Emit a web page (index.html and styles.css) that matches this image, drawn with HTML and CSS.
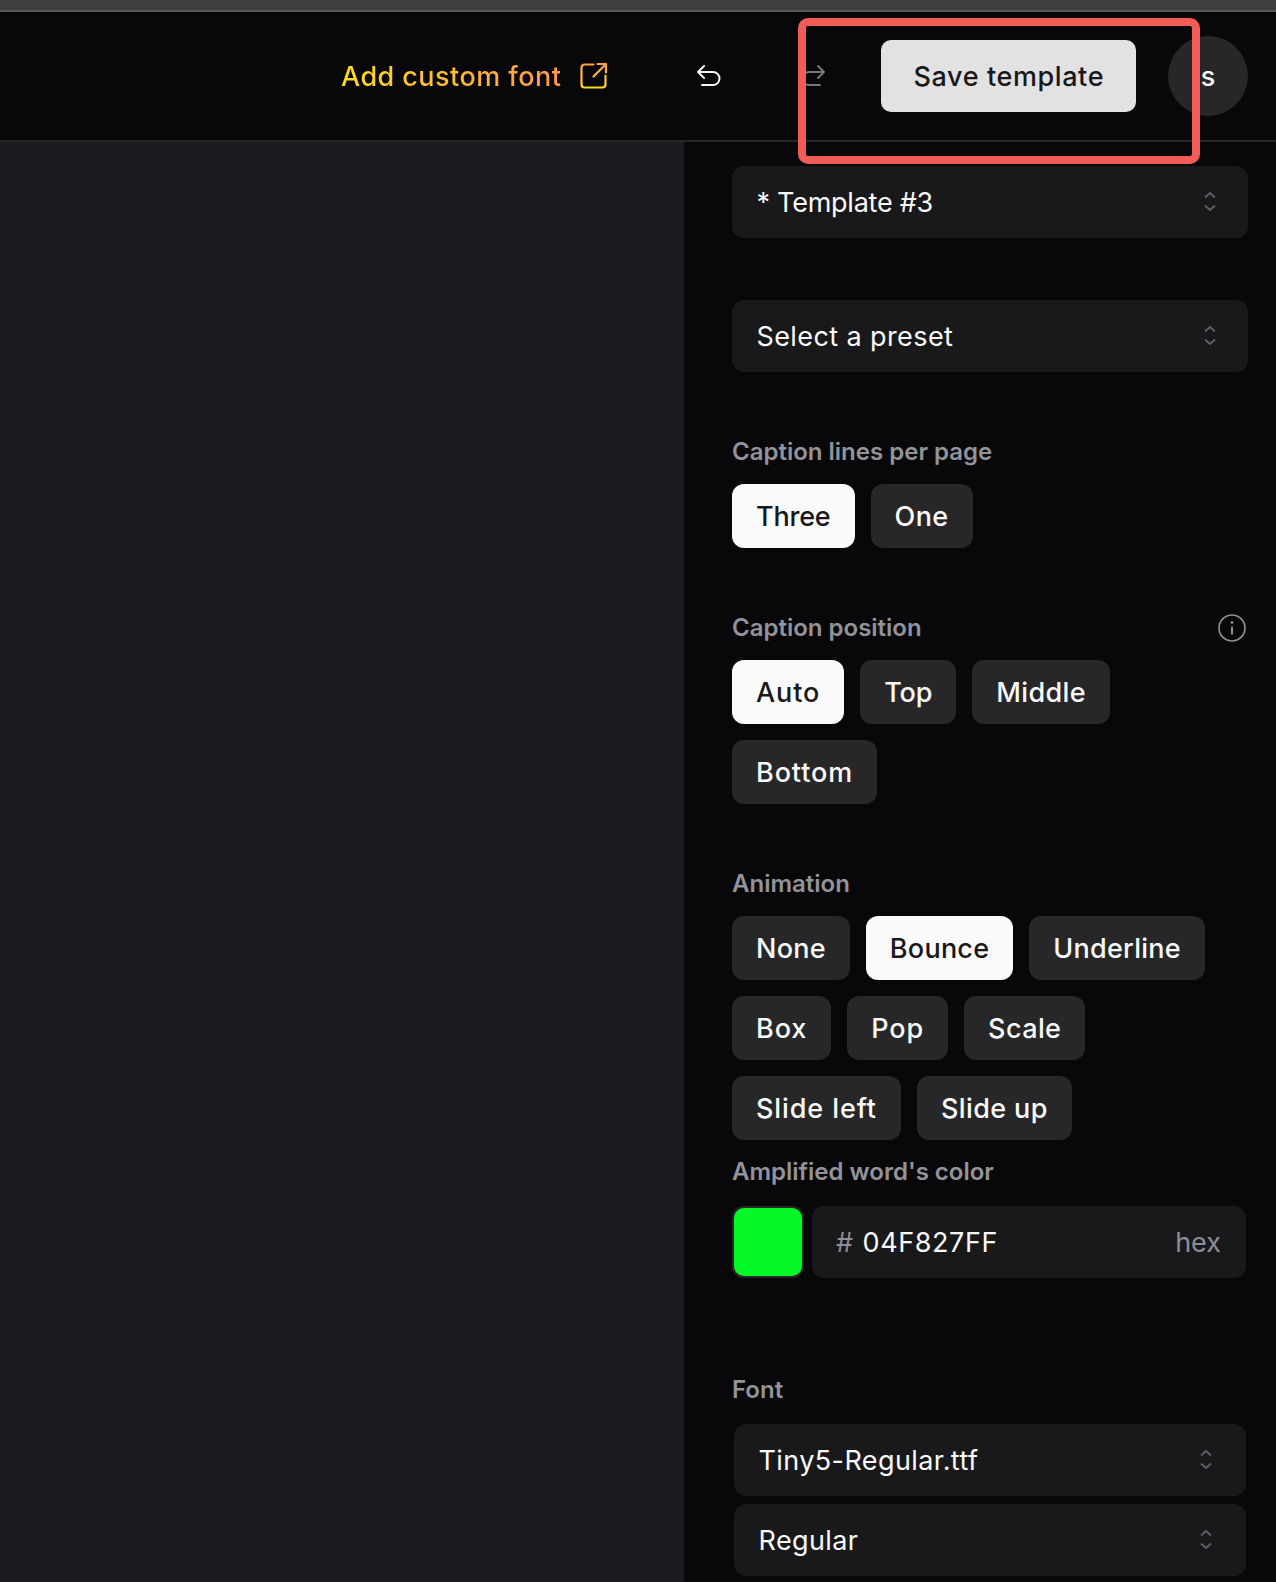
FILE: index.html
```html
<!DOCTYPE html>
<html lang="en">
<head>
<meta charset="utf-8">
<title>Template editor</title>
<link rel="stylesheet" href="styles.css">
</head>
<body>
<div class="app">
  <div class="strip"></div>
  <header class="topbar">
    <a class="custom-font"><span class="gradient-text">Add custom font</span>
      <svg class="ext-icon" width="28" height="28" viewBox="0 0 28 28" fill="none">
        <defs><linearGradient id="g" gradientUnits="userSpaceOnUse" x1="14" y1="1" x2="14" y2="27"><stop offset="0" stop-color="#ff9c4c"/><stop offset="1" stop-color="#ffdc1e"/></linearGradient></defs>
        <path d="M13.500 2.500H4.500a3 3 0 0 0-3 3v17a3 3 0 0 0 3 3h18a3 3 0 0 0 3-3v-9M17.500 2h8.500v8.500M25.500 2.500 13.500 14.500" stroke="url(#g)" stroke-width="2.200" stroke-linecap="round" stroke-linejoin="round"/>
      </svg>
    </a>
    <svg class="undo" width="26" height="22" viewBox="0 0 26 22" fill="none"><path d="M8 1 2 7l6 6M2 7h15a6.500 6.500 0 0 1 0 13H6" stroke="#f5f5f5" stroke-width="2" stroke-linecap="round" stroke-linejoin="round"/></svg>
    <svg class="redo" width="26" height="22" viewBox="0 0 26 22" fill="none"><path d="m18 1 6 6-6 6M24 7H9a6.500 6.500 0 0 0 0 13h11" stroke="#77777b" stroke-width="2" stroke-linecap="round" stroke-linejoin="round"/></svg>
    <button class="save">Save template</button>
    <div class="avatar">s</div>
  </header>
  <main class="main">
    <div class="canvas"></div>
    <aside class="panel">
      <div class="select"><span class="narrow">* Template #3</span>
        <svg class="chev" width="14" height="22" viewBox="0 0 14 22" fill="none"><path d="m2.500 6 4.500-4 4.500 4M2.500 15 7 19l4.500-4" stroke="#5f5f66" stroke-width="1.800" stroke-linecap="round" stroke-linejoin="round"/></svg></div>
      <div class="select preset"><span>Select a preset</span>
        <svg class="chev" width="14" height="22" viewBox="0 0 14 22" fill="none"><path d="m2.500 6 4.500-4 4.500 4M2.500 15 7 19l4.500-4" stroke="#5f5f66" stroke-width="1.800" stroke-linecap="round" stroke-linejoin="round"/></svg></div>

      <div class="label first">Caption lines per page</div>
      <div class="chips">
        <button class="chip on narrow">Three</button><button class="chip">One</button>
      </div>

      <div class="label with-info">Caption position
        <svg width="28" height="28" viewBox="0 0 28 28" fill="none"><circle cx="14" cy="14" r="13" stroke="#8e8e93" stroke-width="1.700"/><path d="M14 12.500v8" stroke="#a5a5aa" stroke-width="1.700"/><circle cx="14" cy="8.500" r="1.200" fill="#a5a5aa"/></svg>
      </div>
      <div class="chips">
        <button class="chip on wide">Auto</button><button class="chip narrow">Top</button><button class="chip">Middle</button><button class="chip wide">Bottom</button>
      </div>

      <div class="label">Animation</div>
      <div class="chips">
        <button class="chip snug">None</button><button class="chip on snug">Bounce</button><button class="chip snug">Underline</button><button class="chip wide">Box</button><button class="chip wide">Pop</button><button class="chip">Scale</button><button class="chip wide">Slide left</button><button class="chip">Slide up</button>
      </div>

      <div class="label tight">Amplified word's color</div>
      <div class="color-row">
        <div class="swatch"></div>
        <div class="hex-field"><span class="hash">#</span><span class="hex-value">04F827FF</span><span class="hex-unit">hex</span></div>
      </div>

      <div class="label font-label">Font</div>
      <div class="select inset"><span>Tiny5-Regular.ttf</span>
        <svg class="chev" width="14" height="22" viewBox="0 0 14 22" fill="none"><path d="m2.500 6 4.500-4 4.500 4M2.500 15 7 19l4.500-4" stroke="#5f5f66" stroke-width="1.800" stroke-linecap="round" stroke-linejoin="round"/></svg></div>
      <div class="select inset second"><span>Regular</span>
        <svg class="chev" width="14" height="22" viewBox="0 0 14 22" fill="none"><path d="m2.500 6 4.500-4 4.500 4M2.500 15 7 19l4.500-4" stroke="#5f5f66" stroke-width="1.800" stroke-linecap="round" stroke-linejoin="round"/></svg></div>
    </aside>
  </main>
  <div class="highlight"></div>
</div>
</body>
</html>
```
FILE: styles.css
```css
* { box-sizing: border-box; }
html, body { margin: 0; height: 100%; background: #08080a; overflow: hidden; }
body { font-family: Inter, "Liberation Sans", sans-serif; color: #fafafa; font-size: 27px; font-weight: 450; letter-spacing: 0.4px; }
button { font: inherit; letter-spacing: inherit; border: 0; }

.app { position: relative; height: 1582px; display: flex; flex-direction: column; overflow: hidden; }
.strip { height: 12px; flex: none; background: #3e3e3e; border-bottom: 2px solid #55555a; }

.topbar { flex: none; height: 130px; display: flex; align-items: center; background: #08080a; border-bottom: 2px solid #27272a; padding: 0 0 0 341px; }
.topbar > * { flex: none; }
.custom-font { display: flex; align-items: center; gap: 19px; font-weight: 500; letter-spacing: 0.45px; white-space: nowrap; }
.gradient-text { background: linear-gradient(90deg, #ffdc1e, #ff9a4d); -webkit-background-clip: text; background-clip: text; color: transparent; }
.ext-icon { display: block; flex: none; }
.undo { margin-left: 88px; }
.redo { margin-left: 78px; }
.save { margin-left: 55px; width: 255px; height: 72px; background: #e2e2e2; color: #18181b; border-radius: 10px; padding: 0; letter-spacing: 0.6px; }
.avatar { margin-left: 32px; width: 80px; height: 80px; border-radius: 50%; background: #27272a; display: flex; align-items: center; justify-content: center; font-weight: 500; }

.main { flex: 1; min-height: 0; display: flex; }
.canvas { flex: 1; background: #1b1c20; }
.panel { flex: none; width: 592px; padding: 24px 28px 0 48px; background: #08080a; }

.select { height: 72px; display: flex; align-items: center; justify-content: space-between; background: #19191c; border-radius: 12px; padding: 0 31.5px 0 24.5px; font-weight: 400; }
.select span { letter-spacing: 0.4px; }
.select .narrow { letter-spacing: -0.25px; }
.preset { margin-top: 62px; }
.inset { margin: 0 2px 0 2px; padding-right: 33px; }
.second { margin-top: 8px; }
.chev { display: block; }

.label { height: 32px; line-height: 32px; margin-top: 64px; margin-bottom: 16px; color: #93939a; font-size: 24px; font-weight: 600; letter-spacing: 0; display: flex; align-items: center; justify-content: space-between; }
.label.tight { margin-top: 16px; margin-bottom: 18px; }
.label.font-label { margin-top: 96px; margin-bottom: 18px; }
.with-info svg { margin-right: 2px; }

.chips { display: flex; flex-wrap: wrap; gap: 16px; }
.chip { height: 64px; padding: 0 24px; border-radius: 12px; background: #27272a; color: #fafafa; }
.chip.on { background: #fafafa; color: #18181b; }
.chip.narrow { letter-spacing: -0.2px; }
.chip.snug { letter-spacing: 0.25px; }
.chip.wide { letter-spacing: 0.9px; }

.color-row { display: flex; gap: 8px; margin-right: 2px; font-weight: 400; }
.swatch { flex: none; width: 72px; height: 72px; border-radius: 12px; background: #04f827; border: 2px solid #27272a; }
.hex-field { flex: 1; height: 72px; display: flex; align-items: center; background: #19191c; border-radius: 12px; padding: 0 25px 0 24px; }
.hash { color: #8e8e96; margin-right: 9px; }
.hex-value { flex: 1; letter-spacing: 0.6px; }
.hex-unit { color: #8e8e96; letter-spacing: 0; }

.highlight { position: absolute; left: 798px; top: 18px; width: 402px; height: 146px; border: 8px solid #f25c58; border-radius: 10px; pointer-events: none; }
```
